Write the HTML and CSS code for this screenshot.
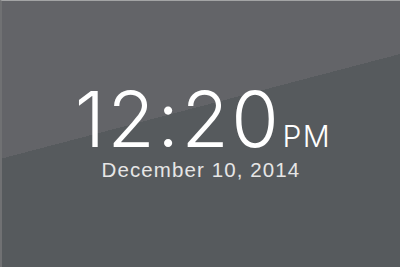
FILE: index.html
```html
<!DOCTYPE html>
<html>
<head>
<meta charset="utf-8">
<link rel="stylesheet" href="styles.css">
</head>
<body>
<div class="screen">
  <div class="time-row">
    <span class="time">12:20</span><span class="ampm">PM</span>
  </div>
  <div class="date">December 10, 2014</div>
</div>
</body>
</html>
```
FILE: styles.css
```css
html, body {
  margin: 0;
  padding: 0;
}
body {
  width: 400px;
  height: 267px;
  overflow: hidden;
  background: #565a5d;
}
.screen {
  box-sizing: border-box;
  width: 400px;
  height: 267px;
  border-top: 1px solid #a3a4a5;
  border-left: 2px solid #707173;
  background: linear-gradient(165.3deg, #636468 0%, #636468 42.5%, #565a5d 42.5%, #565a5d 100%);
  padding-top: 79.5px;
  font-family: Inter, Roboto, "Liberation Sans", sans-serif;
  color: #ffffff;
}
.time-row {
  display: flex;
  justify-content: center;
  align-items: baseline;
  line-height: 1;
  padding-left: 4px;
}
.time {
  font-size: 77px;
  font-weight: 300;
  letter-spacing: 2.5px;
}
.ampm {
  font-size: 30px;
  font-weight: 300;
  letter-spacing: 1.5px;
  margin-left: 1px;
}
.date {
  margin-top: 2px;
  text-align: center;
  font-family: "Liberation Sans", Arial, sans-serif;
  font-size: 20.5px;
  letter-spacing: 1.1px;
  line-height: 1;
  color: #e6e6e6;
}
```
